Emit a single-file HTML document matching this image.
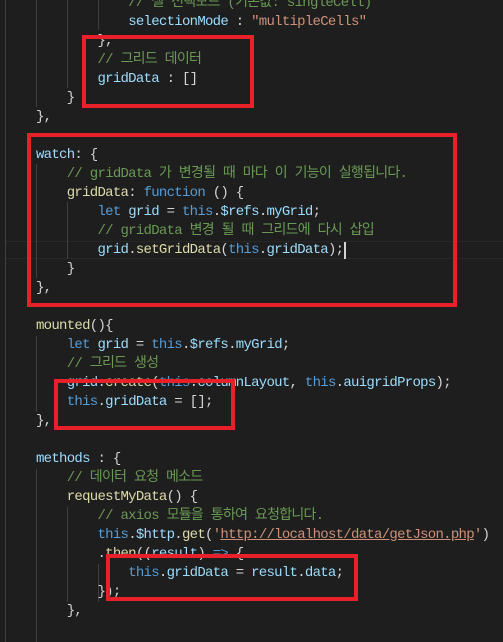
<!DOCTYPE html>
<html><head><meta charset="utf-8"><style>
html,body{margin:0;padding:0;width:503px;height:642px;overflow:hidden;background:#1e1e1e;}
.l{position:absolute;left:36px;white-space:pre;height:19px;line-height:19px;font-family:"Liberation Mono","Noto Sans CJK KR",monospace;font-size:14px;letter-spacing:-0.72px;color:#d4d4d4;}
.c{color:#6a9955}.k{color:#569cd6}.v{color:#9cdcfe}.s{color:#ce9178}.f{color:#dcdcaa}.u{text-decoration:underline}
.g{position:absolute;width:1px;background:#404040}
.b{position:absolute;border:4px solid #e8202a;box-sizing:border-box;z-index:5}
</style></head><body>
<div class="g" style="left:5px;top:0;height:642px"></div>
<div style="position:absolute;left:6px;top:241px;width:497px;height:18px;border-top:1px solid #282828;border-bottom:1px solid #282828;box-sizing:border-box"></div>
<div class="g" style="left:36px;top:0;height:107px"></div>
<div class="g" style="left:67px;top:0;height:88px"></div>
<div class="g" style="left:98px;top:0;height:30px"></div>
<div class="g" style="left:36px;top:164px;height:114px"></div>
<div class="g" style="left:67px;top:202px;height:57px"></div>
<div class="g" style="left:36px;top:336px;height:76px"></div>
<div class="g" style="left:36px;top:469px;height:173px"></div>
<div class="g" style="left:67px;top:507px;height:95px"></div>
<div class="g" style="left:98px;top:564px;height:38px"></div>
<div style="position:absolute;left:344px;top:242px;width:2px;height:17px;background:#d4d4d4"></div>

<div class="l" style="top:-6.5px">            <span class="c">// 셀 선택모드 (기본값: singleCell)</span></div>
<div class="l" style="top:12.5px">            <span class="v">selectionMode</span> : <span class="s">"multipleCells"</span></div>
<div class="l" style="top:31.5px">        },</div>
<div class="l" style="top:50.5px">        <span class="c">// 그리드 데이터</span></div>
<div class="l" style="top:69.5px">        <span class="v">gridData</span> : []</div>
<div class="l" style="top:88.5px">    }</div>
<div class="l" style="top:107.5px">},</div>
<div class="l" style="top:145.5px"><span class="v">watch</span>: {</div>
<div class="l" style="top:164.5px">    <span class="c">// gridData 가 변경될 때 마다 이 기능이 실행됩니다.</span></div>
<div class="l" style="top:183.5px">    <span class="f">gridData</span>: <span class="k">function</span> () {</div>
<div class="l" style="top:202.5px">        <span class="k">let</span> <span class="v">grid</span> = <span class="k">this</span>.<span class="v">$refs</span>.<span class="v">myGrid</span>;</div>
<div class="l" style="top:221.5px">        <span class="c">// gridData 변경 될 때 그리드에 다시 삽입</span></div>
<div class="l" style="top:240.5px">        <span class="v">grid</span>.<span class="f">setGridData</span>(<span class="k">this</span>.<span class="v">gridData</span>);</div>
<div class="l" style="top:259.5px">    }</div>
<div class="l" style="top:278.5px">},</div>
<div class="l" style="top:316.5px"><span class="f">mounted</span>(){</div>
<div class="l" style="top:335.5px">    <span class="k">let</span> <span class="v">grid</span> = <span class="k">this</span>.<span class="v">$refs</span>.<span class="v">myGrid</span>;</div>
<div class="l" style="top:354.5px">    <span class="c">// 그리드 생성</span></div>
<div class="l" style="top:373.5px">    <span class="v">grid</span>.<span class="f">create</span>(<span class="k">this</span>.<span class="v">columnLayout</span>, <span class="k">this</span>.<span class="v">auigridProps</span>);</div>
<div class="l" style="top:392.5px">    <span class="k">this</span>.<span class="v">gridData</span> = [];</div>
<div class="l" style="top:411.5px">},</div>
<div class="l" style="top:449.5px"><span class="v">methods</span> : {</div>
<div class="l" style="top:468.5px">    <span class="c">// 데이터 요청 메소드</span></div>
<div class="l" style="top:487.5px">    <span class="f">requestMyData</span>() {</div>
<div class="l" style="top:506.5px">        <span class="c">// axios 모듈을 통하여 요청합니다.</span></div>
<div class="l" style="top:525.5px">        <span class="k">this</span>.<span class="v">$http</span>.<span class="f">get</span>(<span class="s">'<span class="u">http://localhost/data/getJson.php</span>'</span>)</div>
<div class="l" style="top:544.5px">        .<span class="f">then</span>((<span class="v">result</span>) <span class="k">=&gt;</span> {</div>
<div class="l" style="top:563.5px">            <span class="k">this</span>.<span class="v">gridData</span> = <span class="v">result</span>.<span class="v">data</span>;</div>
<div class="l" style="top:582.5px">        });</div>
<div class="l" style="top:601.5px">    },</div>

<div class="b" style="left:82px;top:35px;width:172px;height:73px"></div>
<div class="b" style="left:27px;top:133px;width:430px;height:174px"></div>
<div class="b" style="left:54px;top:379px;width:181px;height:51px"></div>
<div class="b" style="left:106px;top:554px;width:252px;height:47px"></div>
</body></html>
